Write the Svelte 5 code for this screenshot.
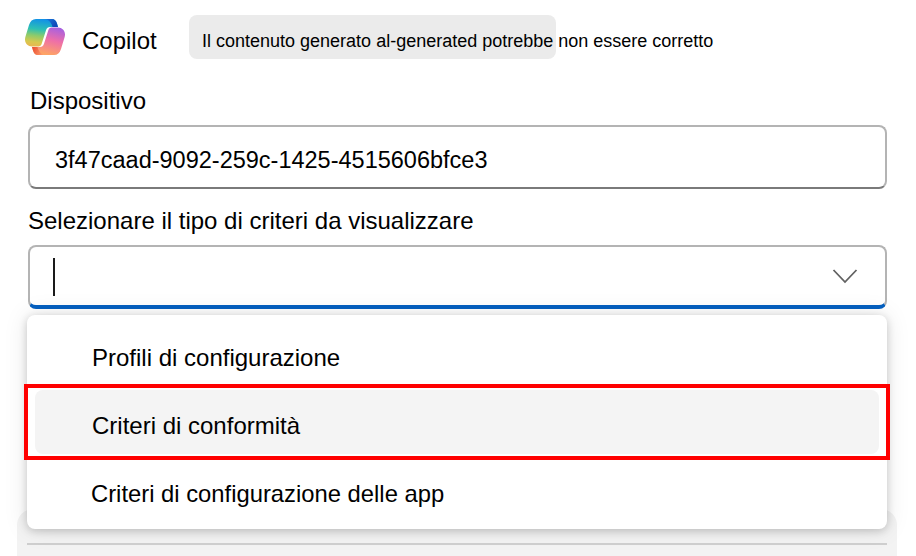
<script>
  const options = [
    { label: 'Profili di configurazione', cls: 'first' },
    { label: 'Criteri di conformità', cls: 'active' },
    { label: 'Criteri di configurazione delle app', cls: 'last' }
  ];
</script>

<div class="page">
  <header class="head">
    <svg class="logo" viewBox="0 0 40 36" aria-hidden="true">
      <defs>
        <linearGradient id="la" x1="0.5" y1="0" x2="0.35" y2="1">
          <stop offset="0" stop-color="#1190e8" />
          <stop offset="0.38" stop-color="#2dc0b4" />
          <stop offset="0.62" stop-color="#8fcb6a" />
          <stop offset="0.85" stop-color="#d8c84e" />
          <stop offset="1" stop-color="#e8b850" />
        </linearGradient>
        <linearGradient id="lb" x1="0" y1="0" x2="1" y2="0.4">
          <stop offset="0" stop-color="#1a80e0" />
          <stop offset="1" stop-color="#1148b8" />
        </linearGradient>
        <linearGradient id="ra" x1="0.7" y1="0" x2="0.4" y2="1">
          <stop offset="0" stop-color="#a860e0" />
          <stop offset="0.45" stop-color="#ee6fa8" />
          <stop offset="1" stop-color="#ffa860" />
        </linearGradient>
        <linearGradient id="rb" x1="0" y1="0" x2="1" y2="0.3">
          <stop offset="0" stop-color="#e8482c" />
          <stop offset="1" stop-color="#ffa070" />
        </linearGradient>
      </defs>
      <path fill="url(#la)" d="M11 0H27C29.500 0 31 1.500 32 4.500L33 8H25C23 8 21.800 9 21 11.300L16.600 25C16 27 14.500 27.500 12.500 27.500H7C3 27.500 0 24.500 0 20.500C0 19.500 .2 18.500 .5 17.500L4 6C5.300 2 7.500 0 11 0Z" />
      <path fill="url(#lb)" d="M19 0H27C29.500 0 31 1.500 32 4.500L33 8H27.500C26.500 4 24 0 19 0Z" />
      <path fill="url(#ra)" d="M29 36H13C10.500 36 9 34.500 8 31.500L7 28H15C17 28 18.200 27 19 24.700L23.400 11C24 9 25.500 8.500 27.500 8.500H33C37 8.500 40 11.500 40 15.500C40 16.500 39.800 17.500 39.500 18.500L36 30C34.700 34 32.500 36 29 36Z" />
      <path fill="url(#rb)" d="M21 36H13C10.500 36 9 34.500 8 31.500L7 28H12.500C13.500 32 16 36 21 36Z" />
    </svg>
    <span class="title">Copilot</span>
    <div class="pill"><span>Il contenuto generato al-generated potrebbe non essere corretto</span></div>
  </header>

  <label class="lbl first-lbl" for="dev">Dispositivo</label>
  <div class="field" id="dev"><span class="val">3f47caad-9092-259c-1425-4515606bfce3</span></div>

  <div class="lbl second-lbl">Selezionare il tipo di criteri da visualizzare</div>
  <div class="field combo">
    <span class="caret"></span>
    <svg class="chev" viewBox="0 0 26 16" aria-hidden="true">
      <path d="M1.500 2L13 14L24.500 2" fill="none" stroke="#616161" stroke-width="1.800" />
    </svg>
    <div class="menu">
      {#each options as o}
        <div class="opt {o.cls}">{o.label}</div>
      {/each}
    </div>
    <div class="mark"></div>
  </div>

  <div class="under"><div class="rule"></div></div>
</div>

<style>
  :global(body) { margin: 0; background: #fff; }
  .page {
    width: 916px;
    height: 556px;
    overflow: hidden;
    background: #fff;
    font-family: "Liberation Sans", Arial, sans-serif;
    color: #000;
  }
  .head {
    display: flex;
    align-items: center;
    height: 44px;
    padding: 15px 0 0 25px;
  }
  .logo { width: 40px; height: 36px; flex: none; }
  .title { margin-left: 17px; font-size: 24px; width: 90px; flex: none; position: relative; top: 4px; }
  .pill {
    margin-left: 17px;
    width: 354px;
    height: 44px;
    padding-left: 13px;
    flex: none;
    display: flex;
    align-items: center;
    background: #ebebeb;
    border-radius: 8px;
    font-size: 18px;
    white-space: nowrap;
  }
  .pill span { position: relative; top: 4px; }
  .lbl { display: block; font-size: 24px; line-height: 28px; }
  .first-lbl { margin: 28px 0 0 30px; }
  .second-lbl { margin: 18px 0 0 28px; }
  .field {
    box-sizing: border-box;
    width: 859px;
    height: 64px;
    margin: 10px 0 0 28px;
    padding-left: 25px;
    display: flex;
    align-items: center;
    border: 2px solid #b4b4b4;
    border-radius: 8px;
    font-size: 23.5px;
    background: #fff;
  }
  #dev { border-bottom-color: #7a7a7a; }
  .val { position: relative; top: 3px; }
  .combo {
    position: relative;
    border-bottom: 4px solid #0560c0;
    justify-content: space-between;
    padding-left: 23px;
    padding-right: 27px;
  }
  .caret { width: 2px; height: 38px; background: #1a1a1a; position: relative; top: 1px; }
  .chev { width: 26px; height: 16px; }
  .menu {
    position: absolute;
    z-index: 2;
    left: -3px;
    top: 68px;
    box-sizing: border-box;
    width: 860px;
    height: 214px;
    padding: 11px 8px 0;
    background: #fff;
    border-radius: 8px;
    box-shadow: 0 2px 8px rgba(0,0,0,.18), 0 0 24px rgba(0,0,0,.10);
  }
  .opt {
    height: 64px;
    display: flex;
    align-items: center;
    padding-left: 57px;
    font-size: 24px;
    border-radius: 8px;
    white-space: nowrap;
  }
  .opt.active { background: #f4f4f4; padding-top: 8px; box-sizing: border-box; }
  .opt.last { padding-left: 56px; margin-top: 8px; font-size: 23.8px; }
  .mark {
    position: absolute;
    z-index: 3;
    left: -6px;
    top: 137px;
    box-sizing: border-box;
    width: 866px;
    height: 76px;
    border: 4px solid #f00;
    pointer-events: none;
  }
  .under {
    box-sizing: border-box;
    width: 880px;
    height: 60px;
    margin: 200px 0 0 17px;
    padding: 34px 10px 0;
    background: #f3f3f3;
    border-radius: 16px 16px 0 0;
  }
  .rule { height: 2px; background: #cfcfcf; }
</style>
